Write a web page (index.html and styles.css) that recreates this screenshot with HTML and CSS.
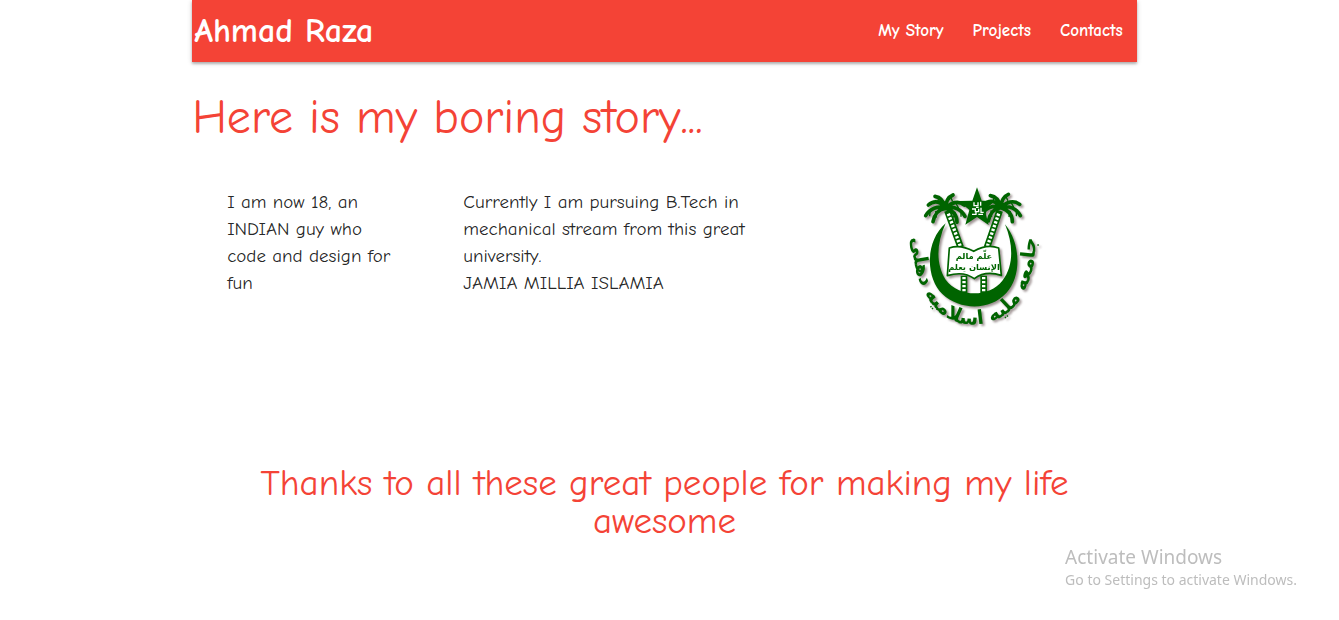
FILE: index.html
```
<!DOCTYPE html>
<html lang="en">
<head>
<meta charset="utf-8">
<meta name="viewport" content="width=device-width, initial-scale=1">
<title>Ahmad Raza</title>
<link rel="stylesheet" href="styles.css">
</head>
<body>
<div class="container">
  <nav class="navbar">
    <a class="brand" href="#">Ahmad Raza</a>
    <ul class="nav-links">
      <li><a href="#story">My Story</a></li>
      <li><a href="#projects">Projects</a></li>
      <li><a href="#contacts">Contacts</a></li>
    </ul>
  </nav>
  <main>
    <h1 class="title" id="story">Here is my boring story...</h1>
    <section class="story">
      <p class="about">I am now 18, an INDIAN guy who code and design for fun</p>
      <p class="study">Currently I am pursuing B.Tech in mechanical stream from this great university.<br>JAMIA MILLIA ISLAMIA</p>
      <svg class="emblem" viewBox="0 0 450 465" role="img" aria-label="Jamia Millia Islamia emblem">
        <defs>
          <path id="ring" d="M42 110C24 290 90 436 225 436C360 436 430 290 404 110"/>
          <g id="palm" fill="none" stroke="#006400" stroke-linecap="round">
            <path stroke-width="11" d="M0 0C-12-20-34-26-52-10M0 0C-24-10-48 2-60 22M0 0C-20 2-34 18-38 40M0 0C-6-24-18-34-32-36M0 0C0-20 8-34 22-40M0 0C16-18 38-24 56-10M0 0C24-8 46 2 58 24M0 0C20 6 34 18 34 42"/>
            <path stroke-width="4" d="M-46 6l-2 16M-30 10l2 16M30-16l8 14M46 8l0 16M28 12l-4 14M-20-32l-4 12M14-36l6 14"/>
          </g>
        </defs>
        <g class="emblem-art">
          <path fill="#006400" d="M140 133C75 190 82 300 130 345C185 396 275 394 322 342C370 290 364 190 318 136C344 198 344 262 310 305C270 356 180 356 140 302C110 256 112 194 140 133Z"/>
          <g stroke="#006400" stroke-width="20"><path d="M145 95L185 205M302 95L264 205M195 290V345M254 290V345"/></g>
          <g stroke="#fff" stroke-width="10" stroke-dasharray="7 5"><path d="M148 104L185 205M299 104L264 205M195 294V342M254 294V342"/></g>
          <use href="#palm" x="140" y="88"/>
          <use href="#palm" x="306" y="86"/>
          <path fill="#006400" d="M234 25L248 65L288 66L257 93L269 138L234 114L199 137L211 93L180 66L220 65Z"/>
          <path stroke="#fff" stroke-width="4" fill="none" d="M225 70v10h12v-10M245 68v12M219 90h10v8h10v-9M246 86v14h8M219 106h12v-6M238 106h14M231 85h8"/>
          <path fill="#fff" stroke="#006400" stroke-width="5" stroke-linejoin="round" d="M151 207C175 198 202 205 224 217C248 203 275 198 299 207L307 289C276 279 248 282 226 299C202 281 174 281 145 290Z"/>
          <g class="emblem-book"><text x="225" y="241">علّم مالم</text><text x="225" y="273">الإنسان يعلم</text></g>
          <text class="emblem-ring"><textPath href="#ring" startOffset="50%">جامعه مليه اسلاميه دهلى</textPath></text>
        </g>
      </svg>
    </section>
    <h2 class="thanks">Thanks to all these great people for making my life awesome</h2>
  </main>
</div>
<aside class="watermark">
  <p class="watermark-title">Activate Windows</p>
  <p class="watermark-text">Go to Settings to activate Windows.</p>
</aside>
</body>
</html>
```
FILE: styles.css
```
* { box-sizing: border-box; }
body {
  margin: 0;
  background: #fff;
  color: rgba(0, 0, 0, 0.87);
  font-family: "Comic Sans MS", "Comic Neue", "Open Sans", sans-serif;
}
h1, h2, p, ul { margin: 0; padding: 0; font-weight: 400; }
.container { margin: 0 15.1% 0 14.35%; }
.navbar {
  display: flex;
  justify-content: space-between;
  height: 62px;
  background: #f44336;
  box-shadow: 0 2px 2px rgba(0, 0, 0, 0.2), 0 1px 5px rgba(0, 0, 0, 0.2);
}
.navbar a { color: #fff; text-decoration: none; font-weight: 700; }
.brand { padding-left: 2px; font-size: 34px; line-height: 62px; }
.nav-links { display: flex; list-style: none; }
.nav-links a { display: block; padding: 0 14px 0 15px; font-size: 17px; line-height: 62px; }
.title { margin-top: 30px; color: #f44336; font-size: 48px; line-height: 52px; }
.story {
  display: grid;
  grid-template-columns: 25% 35% 40%;
  margin-top: 35px;
  font-size: 19px;
  line-height: 27px;
}
.story p { padding: 10px 0 10px 35px; }
.story .about { padding-right: 35px; }
.emblem { width: 150px; height: 155px; justify-self: center; margin-left: 52px; }
.emblem-art { filter: drop-shadow(6px 6px 3px rgba(80, 60, 60, 0.55)); }
.emblem text { fill: #006400; text-anchor: middle; direction: rtl; font-family: "DejaVu Sans", sans-serif; font-weight: 700; }
.emblem .emblem-book text { font-size: 25px; }
.emblem .emblem-ring { font-size: 58px; }
.thanks {
  margin: 130px 60px 0;
  color: #f44336;
  font-size: 37px;
  line-height: 38px;
  text-align: center;
}
.watermark {
  position: fixed;
  right: 42px;
  bottom: 30px;
  color: #bdbdbd;
  font-family: "Segoe UI", "Noto Sans", sans-serif;
}
.watermark-title { font-size: 19px; line-height: 26px; }
.watermark-text { font-size: 14px; line-height: 20px; }
```
